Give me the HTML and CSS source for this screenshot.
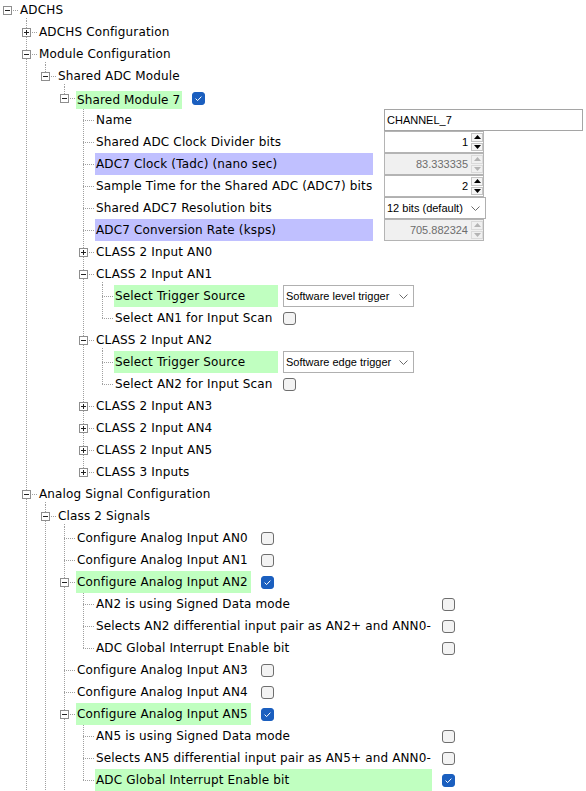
FILE: index.html
```html
<!DOCTYPE html>
<html>
<head>
<meta charset="utf-8">
<link rel="stylesheet" href="styles.css">
</head>
<body>
<ul class="tree">
  <li class="node root">
    <div class="row open"><span class="tw"><svg class="exp" width="9" height="9" viewBox="0 0 9 9"><rect x=".5" y=".5" width="8" height="8" fill="#fff" stroke="#8e8e8e"/><path d="M2 4.5h5" stroke="#222"/></svg></span><span class="label">ADCHS</span></div>
    <ul>
      <li class="node">
        <div class="row"><span class="tw"><svg class="exp" width="9" height="9" viewBox="0 0 9 9"><rect x=".5" y=".5" width="8" height="8" fill="#fff" stroke="#8e8e8e"/><path d="M2 4.5h5M4.5 2v5" stroke="#222"/></svg></span><span class="label">ADCHS Configuration</span></div>
      </li>
      <li class="node">
        <div class="row open"><span class="tw"><svg class="exp" width="9" height="9" viewBox="0 0 9 9"><rect x=".5" y=".5" width="8" height="8" fill="#fff" stroke="#8e8e8e"/><path d="M2 4.5h5" stroke="#222"/></svg></span><span class="label">Module Configuration</span></div>
        <ul>
          <li class="node last">
            <div class="row open"><span class="tw"><svg class="exp" width="9" height="9" viewBox="0 0 9 9"><rect x=".5" y=".5" width="8" height="8" fill="#fff" stroke="#8e8e8e"/><path d="M2 4.5h5" stroke="#222"/></svg></span><span class="label">Shared ADC Module</span></div>
            <ul class="grp-sm">
              <li class="node last">
                <div class="row open"><span class="tw"><svg class="exp" width="9" height="9" viewBox="0 0 9 9"><rect x=".5" y=".5" width="8" height="8" fill="#fff" stroke="#8e8e8e"/><path d="M2 4.5h5" stroke="#222"/></svg></span><span class="label green tight">Shared Module 7</span><svg class="ed cb" width="13" height="13"><rect x=".5" y=".5" width="12" height="12" rx="2.5" fill="#1b5fbf" stroke="#1b5fbf"/><path d="M3.6 6.6l2 2 3.8-4" fill="none" stroke="#fff"/></svg></div>
                <ul class="grp-mod">
                  <li class="node">
                    <div class="row"><span class="tw"></span><span class="label">Name</span><span class="ed field">CHANNEL_7</span></div>
                  </li>
                  <li class="node">
                    <div class="row"><span class="tw"></span><span class="label">Shared ADC Clock Divider bits</span><span class="ed spin"><span class="spin-val">1</span><span class="spin-btns"><span class="sb"><svg width="7" height="4"><path d="M0 4L3.5 0 7 4z" fill="#000"/></svg></span><span class="sb"><svg width="7" height="4"><path d="M0 0L3.5 4 7 0z" fill="#000"/></svg></span></span></span></div>
                  </li>
                  <li class="node">
                    <div class="row"><span class="tw"></span><span class="label purple">ADC7 Clock (Tadc) (nano sec)</span><span class="ed spin disabled"><span class="spin-val">83.333335</span><span class="spin-btns"><span class="sb"><svg width="7" height="4"><path d="M0 4L3.5 0 7 4z" fill="#b4b4b4"/></svg></span><span class="sb"><svg width="7" height="4"><path d="M0 0L3.5 4 7 0z" fill="#b4b4b4"/></svg></span></span></span></div>
                  </li>
                  <li class="node">
                    <div class="row"><span class="tw"></span><span class="label">Sample Time for the Shared ADC (ADC7) bits</span><span class="ed spin"><span class="spin-val">2</span><span class="spin-btns"><span class="sb"><svg width="7" height="4"><path d="M0 4L3.5 0 7 4z" fill="#000"/></svg></span><span class="sb"><svg width="7" height="4"><path d="M0 0L3.5 4 7 0z" fill="#000"/></svg></span></span></span></div>
                  </li>
                  <li class="node">
                    <div class="row"><span class="tw"></span><span class="label">Shared ADC7 Resolution bits</span><span class="ed combo res">12 bits (default)<svg class="chev" width="9" height="5"><path d="M.5 .5l4 4 4-4" fill="none" stroke="#6a6a6a"/></svg></span></div>
                  </li>
                  <li class="node">
                    <div class="row"><span class="tw"></span><span class="label purple">ADC7 Conversion Rate (ksps)</span><span class="ed spin disabled"><span class="spin-val">705.882324</span><span class="spin-btns"><span class="sb"><svg width="7" height="4"><path d="M0 4L3.5 0 7 4z" fill="#b4b4b4"/></svg></span><span class="sb"><svg width="7" height="4"><path d="M0 0L3.5 4 7 0z" fill="#b4b4b4"/></svg></span></span></span></div>
                  </li>
                  <li class="node">
                    <div class="row"><span class="tw"><svg class="exp" width="9" height="9" viewBox="0 0 9 9"><rect x=".5" y=".5" width="8" height="8" fill="#fff" stroke="#8e8e8e"/><path d="M2 4.5h5M4.5 2v5" stroke="#222"/></svg></span><span class="label">CLASS 2 Input AN0</span></div>
                  </li>
                  <li class="node">
                    <div class="row open"><span class="tw"><svg class="exp" width="9" height="9" viewBox="0 0 9 9"><rect x=".5" y=".5" width="8" height="8" fill="#fff" stroke="#8e8e8e"/><path d="M2 4.5h5" stroke="#222"/></svg></span><span class="label">CLASS 2 Input AN1</span></div>
                    <ul class="grp-trig">
                      <li class="node">
                        <div class="row"><span class="tw"></span><span class="label green">Select Trigger Source</span><span class="ed combo trig">Software level trigger<svg class="chev" width="9" height="5"><path d="M.5 .5l4 4 4-4" fill="none" stroke="#6a6a6a"/></svg></span></div>
                      </li>
                      <li class="node last">
                        <div class="row"><span class="tw"></span><span class="label">Select AN1 for Input Scan</span><svg class="ed cb" width="13" height="13"><rect x=".5" y=".5" width="12" height="12" rx="2.5" fill="#f3f3f3" stroke="#6e6e6e"/></svg></div>
                      </li>
                    </ul>
                  </li>
                  <li class="node">
                    <div class="row open"><span class="tw"><svg class="exp" width="9" height="9" viewBox="0 0 9 9"><rect x=".5" y=".5" width="8" height="8" fill="#fff" stroke="#8e8e8e"/><path d="M2 4.5h5" stroke="#222"/></svg></span><span class="label">CLASS 2 Input AN2</span></div>
                    <ul class="grp-trig">
                      <li class="node">
                        <div class="row"><span class="tw"></span><span class="label green">Select Trigger Source</span><span class="ed combo trig">Software edge trigger<svg class="chev" width="9" height="5"><path d="M.5 .5l4 4 4-4" fill="none" stroke="#6a6a6a"/></svg></span></div>
                      </li>
                      <li class="node last">
                        <div class="row"><span class="tw"></span><span class="label">Select AN2 for Input Scan</span><svg class="ed cb" width="13" height="13"><rect x=".5" y=".5" width="12" height="12" rx="2.5" fill="#f3f3f3" stroke="#6e6e6e"/></svg></div>
                      </li>
                    </ul>
                  </li>
                  <li class="node">
                    <div class="row"><span class="tw"><svg class="exp" width="9" height="9" viewBox="0 0 9 9"><rect x=".5" y=".5" width="8" height="8" fill="#fff" stroke="#8e8e8e"/><path d="M2 4.5h5M4.5 2v5" stroke="#222"/></svg></span><span class="label">CLASS 2 Input AN3</span></div>
                  </li>
                  <li class="node">
                    <div class="row"><span class="tw"><svg class="exp" width="9" height="9" viewBox="0 0 9 9"><rect x=".5" y=".5" width="8" height="8" fill="#fff" stroke="#8e8e8e"/><path d="M2 4.5h5M4.5 2v5" stroke="#222"/></svg></span><span class="label">CLASS 2 Input AN4</span></div>
                  </li>
                  <li class="node">
                    <div class="row"><span class="tw"><svg class="exp" width="9" height="9" viewBox="0 0 9 9"><rect x=".5" y=".5" width="8" height="8" fill="#fff" stroke="#8e8e8e"/><path d="M2 4.5h5M4.5 2v5" stroke="#222"/></svg></span><span class="label">CLASS 2 Input AN5</span></div>
                  </li>
                  <li class="node last">
                    <div class="row"><span class="tw"><svg class="exp" width="9" height="9" viewBox="0 0 9 9"><rect x=".5" y=".5" width="8" height="8" fill="#fff" stroke="#8e8e8e"/><path d="M2 4.5h5M4.5 2v5" stroke="#222"/></svg></span><span class="label">CLASS 3 Inputs</span></div>
                  </li>
                </ul>
              </li>
            </ul>
          </li>
        </ul>
      </li>
      <li class="node">
        <div class="row open"><span class="tw"><svg class="exp" width="9" height="9" viewBox="0 0 9 9"><rect x=".5" y=".5" width="8" height="8" fill="#fff" stroke="#8e8e8e"/><path d="M2 4.5h5" stroke="#222"/></svg></span><span class="label">Analog Signal Configuration</span></div>
        <ul>
          <li class="node">
            <div class="row open"><span class="tw"><svg class="exp" width="9" height="9" viewBox="0 0 9 9"><rect x=".5" y=".5" width="8" height="8" fill="#fff" stroke="#8e8e8e"/><path d="M2 4.5h5" stroke="#222"/></svg></span><span class="label">Class 2 Signals</span></div>
            <ul class="grp-c2">
              <li class="node">
                <div class="row"><span class="tw"></span><span class="label">Configure Analog Input AN0</span><svg class="ed cb" width="13" height="13"><rect x=".5" y=".5" width="12" height="12" rx="2.5" fill="#f3f3f3" stroke="#6e6e6e"/></svg></div>
              </li>
              <li class="node">
                <div class="row"><span class="tw"></span><span class="label">Configure Analog Input AN1</span><svg class="ed cb" width="13" height="13"><rect x=".5" y=".5" width="12" height="12" rx="2.5" fill="#f3f3f3" stroke="#6e6e6e"/></svg></div>
              </li>
              <li class="node">
                <div class="row open"><span class="tw"><svg class="exp" width="9" height="9" viewBox="0 0 9 9"><rect x=".5" y=".5" width="8" height="8" fill="#fff" stroke="#8e8e8e"/><path d="M2 4.5h5" stroke="#222"/></svg></span><span class="label green">Configure Analog Input AN2</span><svg class="ed cb" width="13" height="13"><rect x=".5" y=".5" width="12" height="12" rx="2.5" fill="#1b5fbf" stroke="#1b5fbf"/><path d="M3.6 6.6l2 2 3.8-4" fill="none" stroke="#fff"/></svg></div>
                <ul class="grp-an">
                  <li class="node">
                    <div class="row"><span class="tw"></span><span class="label">AN2 is using Signed Data mode</span><svg class="ed cb" width="13" height="13"><rect x=".5" y=".5" width="12" height="12" rx="2.5" fill="#f3f3f3" stroke="#6e6e6e"/></svg></div>
                  </li>
                  <li class="node">
                    <div class="row"><span class="tw"></span><span class="label">Selects AN2 differential input pair as AN2+ and ANN0-</span><svg class="ed cb" width="13" height="13"><rect x=".5" y=".5" width="12" height="12" rx="2.5" fill="#f3f3f3" stroke="#6e6e6e"/></svg></div>
                  </li>
                  <li class="node last">
                    <div class="row"><span class="tw"></span><span class="label">ADC Global Interrupt Enable bit</span><svg class="ed cb" width="13" height="13"><rect x=".5" y=".5" width="12" height="12" rx="2.5" fill="#f3f3f3" stroke="#6e6e6e"/></svg></div>
                  </li>
                </ul>
              </li>
              <li class="node">
                <div class="row"><span class="tw"></span><span class="label">Configure Analog Input AN3</span><svg class="ed cb" width="13" height="13"><rect x=".5" y=".5" width="12" height="12" rx="2.5" fill="#f3f3f3" stroke="#6e6e6e"/></svg></div>
              </li>
              <li class="node">
                <div class="row"><span class="tw"></span><span class="label">Configure Analog Input AN4</span><svg class="ed cb" width="13" height="13"><rect x=".5" y=".5" width="12" height="12" rx="2.5" fill="#f3f3f3" stroke="#6e6e6e"/></svg></div>
              </li>
              <li class="node">
                <div class="row open"><span class="tw"><svg class="exp" width="9" height="9" viewBox="0 0 9 9"><rect x=".5" y=".5" width="8" height="8" fill="#fff" stroke="#8e8e8e"/><path d="M2 4.5h5" stroke="#222"/></svg></span><span class="label green">Configure Analog Input AN5</span><svg class="ed cb" width="13" height="13"><rect x=".5" y=".5" width="12" height="12" rx="2.5" fill="#1b5fbf" stroke="#1b5fbf"/><path d="M3.6 6.6l2 2 3.8-4" fill="none" stroke="#fff"/></svg></div>
                <ul class="grp-an">
                  <li class="node">
                    <div class="row"><span class="tw"></span><span class="label">AN5 is using Signed Data mode</span><svg class="ed cb" width="13" height="13"><rect x=".5" y=".5" width="12" height="12" rx="2.5" fill="#f3f3f3" stroke="#6e6e6e"/></svg></div>
                  </li>
                  <li class="node">
                    <div class="row"><span class="tw"></span><span class="label">Selects AN5 differential input pair as AN5+ and ANN0-</span><svg class="ed cb" width="13" height="13"><rect x=".5" y=".5" width="12" height="12" rx="2.5" fill="#f3f3f3" stroke="#6e6e6e"/></svg></div>
                  </li>
                  <li class="node last">
                    <div class="row"><span class="tw"></span><span class="label green">ADC Global Interrupt Enable bit</span><svg class="ed cb" width="13" height="13"><rect x=".5" y=".5" width="12" height="12" rx="2.5" fill="#1b5fbf" stroke="#1b5fbf"/><path d="M3.6 6.6l2 2 3.8-4" fill="none" stroke="#fff"/></svg></div>
                  </li>
                </ul>
              </li>
            </ul>
          </li>
        </ul>
      </li>
    </ul>
  </li>
</ul>
</body>
</html>
```
FILE: styles.css
```css
html, body {
  margin: 0;
  padding: 0;
  height: 791px;
  overflow: hidden;
  background: #fff;
}
body {
  font-family: "DejaVu Sans", Verdana, sans-serif;
  font-size: 12px;
  letter-spacing: 0.15px;
  color: #000;
}
.tree, .tree ul {
  list-style: none;
  margin: 0;
  padding: 0;
}
.tree {
  margin-top: -1px;
  --lw: auto;
  --gap: 10px;
}
.tree ul {
  padding-left: 19px;
}
.node {
  background-image: repeating-linear-gradient(to bottom, #a0a0a0 0 1px, transparent 1px 2px);
  background-repeat: no-repeat;
  background-position: 7px 0;
  background-size: 1px 100%;
}
.node.last {
  background-size: 1px 12px;
}
.node.root {
  background: none;
}
.row {
  display: flex;
  align-items: center;
  height: 22px;
}
.row.open {
  background-image: repeating-linear-gradient(to bottom, #a0a0a0 0 1px, transparent 1px 2px);
  background-repeat: no-repeat;
  background-position: 26px 19px;
  background-size: 1px 3px;
}
.tw {
  flex: none;
  width: 19px;
  height: 22px;
  display: flex;
  align-items: center;
  background-image: repeating-linear-gradient(to right, #a0a0a0 0 1px, transparent 1px 2px);
  background-repeat: no-repeat;
  background-position: 7px 11px;
  background-size: 11px 1px;
}
.exp {
  display: block;
  margin-left: 3px;
}
.label {
  flex: none;
  box-sizing: border-box;
  width: var(--lw);
  height: 22px;
  line-height: 22px;
  padding: 0 1px;
  white-space: nowrap;
}
.label.green { background: #c0ffc0; }
.label.purple { background: #c0c0ff; }
.label.tight {
  height: 18px;
  line-height: 18px;
  align-self: flex-end;
}
.ed {
  flex: none;
  margin-left: var(--gap);
}
.grp-sm { --lw: 106px; --gap: 10px; }
.grp-mod { --lw: 278px; --gap: 11px; }
.grp-trig { --lw: 164px; --gap: 5px; }
.grp-c2 { --lw: 175px; --gap: 10px; }
.grp-an { --lw: 337px; --gap: 10px; }

.cb { display: block; }

.field, .spin, .combo {
  font-family: "Liberation Sans", Arial, sans-serif;
  font-size: 11px;
  letter-spacing: 0;
  box-sizing: border-box;
  height: 22px;
}
.field {
  width: 199px;
  border: 1px solid #a5a5a5;
  line-height: 20px;
  padding-left: 2px;
  background: #fff;
}
.spin {
  display: flex;
  width: 100px;
  border: 1px solid #b4b4b4;
  background: #fff;
}
.spin-val {
  flex: 1;
  text-align: right;
  line-height: 20px;
  padding-right: 3px;
}
.spin.disabled {
  background: #f0f0f0;
  color: #6d6d6d;
}
.spin-btns {
  flex: none;
  width: 12px;
  display: flex;
  flex-direction: column;
  gap: 1px;
  padding: 1px 0;
}
.sb {
  flex: 1;
  display: flex;
  align-items: center;
  justify-content: center;
  border: 1px solid #c4c4c4;
  background: #f5f5f5;
}
.spin.disabled .sb {
  border-color: #dadada;
  background: #f0f0f0;
}
.sb svg { display: block; }
.combo {
  display: flex;
  align-items: center;
  justify-content: space-between;
  border: 1px solid #b0b0b0;
  background: #fff;
  padding: 0 5px 0 2px;
  white-space: nowrap;
}
.combo.res { width: 102px; }
.combo.trig { width: 131px; }
.chev { display: block; flex: none; }
```
